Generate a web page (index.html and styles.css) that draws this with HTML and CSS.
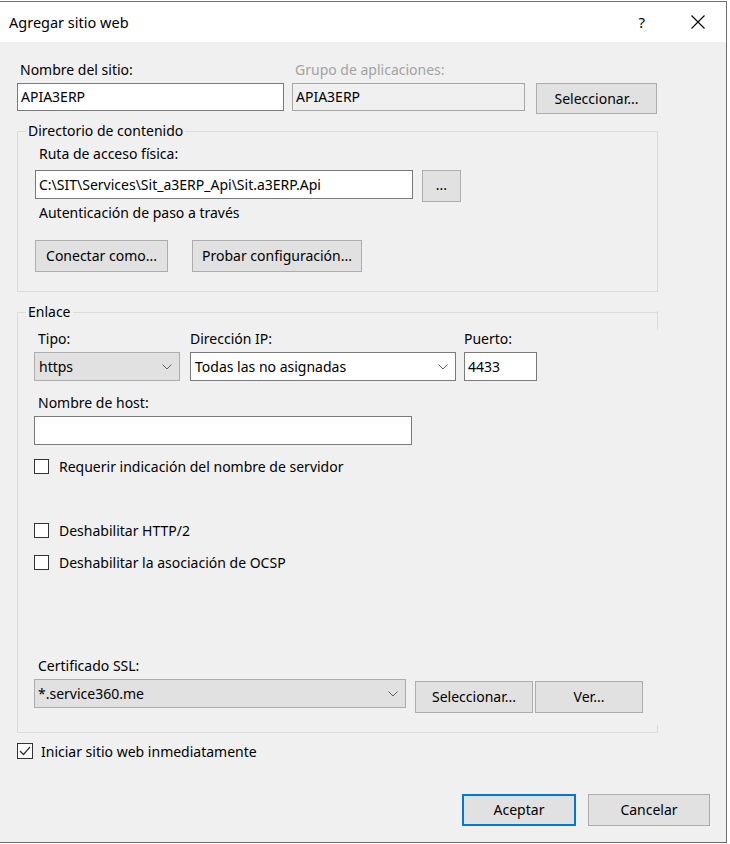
FILE: index.html
```html
<!DOCTYPE html>
<html lang="es">
<head>
  <meta charset="UTF-8" />
  <title>Agregar sitio web</title>
  <link rel="stylesheet" href="styles.css">
</head>
<body>

  <div class="window">
    <div class="titlebar">
      <span class="title">Agregar sitio web</span>
      <span class="help">?</span>
      <svg class="close" width="14" height="14" viewBox="0 0 14 14">
        <path d="M0.5 0.5 L13.5 13.5 M13.5 0.5 L0.5 13.5" stroke="#000" stroke-width="1.1" fill="none" />
      </svg>
    </div>

    <div class="client">
      <div class="row-site">
        <div class="field field-name">
          <div class="lbl">Nombre del sitio:</div>
          <div class="textbox">APIA3ERP</div>
        </div>
        <div class="field field-pool">
          <div class="lbl lbl-disabled">Grupo de aplicaciones:</div>
          <div class="textbox textbox-disabled">APIA3ERP</div>
        </div>
        <div class="btn btn-pool">Seleccionar...</div>
      </div>

      <fieldset class="group group-content">
        <legend>Directorio de contenido</legend>
        <div class="group-body">
          <div class="lbl lbl-indent">Ruta de acceso física:</div>
          <div class="path-row">
            <div class="textbox textbox-path">C:\SIT\Services\Sit_a3ERP_Api\Sit.a3ERP.Api</div>
            <div class="btn btn-browse">...</div>
          </div>
          <div class="lbl lbl-indent lbl-auth">Autenticación de paso a través</div>
          <div class="auth-row">
            <div class="btn btn-connect">Conectar como...</div>
            <div class="btn btn-test">Probar configuración...</div>
          </div>
        </div>
      </fieldset>

      <fieldset class="group group-binding">
        <legend>Enlace</legend>
        <div class="group-body">
          <div class="binding-row">
            <div class="col col-type">
              <div class="lbl lbl-indent">Tipo:</div>
              <div class="combo combo-gray">
                <span>https</span>
                <svg class="chevron" width="10" height="6" viewBox="0 0 10 6"><polyline points="0.5,0.5 5,5 9.5,0.5" fill="none" stroke="#606060" stroke-width="1" /></svg>
              </div>
            </div>
            <div class="col col-ip">
              <div class="lbl">Dirección IP:</div>
              <div class="combo combo-white">
                <span>Todas las no asignadas</span>
                <svg class="chevron" width="10" height="6" viewBox="0 0 10 6"><polyline points="0.5,0.5 5,5 9.5,0.5" fill="none" stroke="#606060" stroke-width="1" /></svg>
              </div>
            </div>
            <div class="col col-port">
              <div class="lbl">Puerto:</div>
              <div class="textbox textbox-port">4433</div>
            </div>
          </div>

          <div class="lbl lbl-indent lbl-host">Nombre de host:</div>
          <div class="textbox textbox-host"></div>

          <div class="check check-sni"><span class="box"></span>Requerir indicación del nombre de servidor</div>
          <div class="check check-http2"><span class="box"></span>Deshabilitar HTTP/2</div>
          <div class="check check-ocsp"><span class="box"></span>Deshabilitar la asociación de OCSP</div>

          <div class="lbl lbl-indent lbl-cert">Certificado SSL:</div>
          <div class="cert-row">
            <div class="combo combo-gray combo-cert">
              <span>*.service360.me</span>
              <svg class="chevron" width="10" height="6" viewBox="0 0 10 6"><polyline points="0.5,0.5 5,5 9.5,0.5" fill="none" stroke="#606060" stroke-width="1" /></svg>
            </div>
            <div class="btn btn-cert-select">Seleccionar...</div>
            <div class="btn btn-cert-view">Ver...</div>
          </div>
        </div>
      </fieldset>

      <div class="check check-start">
        <span class="box">
          <svg width="14" height="14" viewBox="0 0 14 14"><polyline points="2,7 5.5,10.5 12,3" fill="none" stroke="#333" stroke-width="1.2" /></svg>
        </span>Iniciar sitio web inmediatamente
      </div>

      <div class="footer">
        <div class="btn btn-ok">Aceptar</div>
        <div class="btn btn-cancel">Cancelar</div>
      </div>
    </div>
  </div>

</body>
</html>
```

FILE: styles.css
```css
* { box-sizing: border-box; }

body {
  margin: 0;
  background: #ffffff;
  font-family: 'Noto Sans', 'Open Sans', sans-serif;
  font-size: 14px;
  color: #000;
}

.window {
  width: 727px;
  height: 842px;
  margin-top: 1px;
  border: 1px solid #6e6e6e;
  border-left: 0;
  background: #f0f0f0;
  display: flex;
  flex-direction: column;
}

.titlebar {
  height: 40px;
  background: #ffffff;
  display: flex;
  align-items: center;
  padding-left: 9px;
  font-size: 14.5px;
}

.help { margin-left: auto; font-size: 15px; }

.close { margin-left: 46px; margin-right: 21px; }

.client {
  flex: 1;
  padding: 18px 16px 0 17px;
}

/* generic controls */
.lbl { height: 20px; line-height: 20px; white-space: nowrap; }
.lbl-indent { padding-left: 4px; }
.lbl-disabled { color: #a3a3a3; padding-left: 3px; }
.field-name .lbl { padding-left: 3px; }

.textbox {
  height: 28px;
  line-height: 26px;
  border: 1px solid #7a7a7a;
  background: #ffffff;
  padding: 0 3px;
  white-space: nowrap;
  overflow: hidden;
}

.textbox-disabled { background: #f0f0f0; border-color: #a6a6a6; }

.btn {
  height: 32px;
  line-height: 30px;
  border: 1px solid #adadad;
  background: #e1e1e1;
  text-align: center;
  white-space: nowrap;
}

.combo {
  height: 30px;
  display: flex;
  align-items: center;
  justify-content: space-between;
  padding: 0 7px 0 4px;
  white-space: nowrap;
}

.combo-gray { background: #e1e1e1; border: 1px solid #adadad; }
.combo-white { background: #ffffff; border: 1px solid #7a7a7a; }

/* first row */
.row-site { display: flex; align-items: flex-start; }
.field-name { width: 267px; }
.field-pool { width: 233px; margin-left: 8px; }
.field .lbl { margin-bottom: 3px; }
.btn-pool { width: 121px; margin-left: 11px; margin-top: 23px; height: 31px; line-height: 29px; }

/* group boxes */
.group {
  margin: 0;
  padding: 0;
  border: 1px solid #dcdcdc;
  width: 641px;
  min-width: 0;
}

.group legend {
  margin-left: 8px;
  padding: 0 2px;
  height: 20px;
  line-height: 20px;
}

.group-content { margin-top: 7px; }
.group-content .group-body { padding: 3px 0 19px 17px; }

.path-row { display: flex; align-items: flex-start; margin-top: 6px; }
.textbox-path { width: 378px; height: 29px; line-height: 27px; }
.btn-browse { width: 39px; margin-left: 9px; line-height: 28px; }
.lbl-auth { margin-top: 1px; }

.auth-row { display: flex; margin-top: 17px; gap: 24px; }
.btn-connect { width: 133px; }
.btn-test { width: 170px; }

.group-binding {
  margin-top: 10px;
  position: relative;
  border-right-color: transparent;
}

/* the right edge shows only near the corners */
.group-binding::before,
.group-binding::after {
  content: "";
  position: absolute;
  right: -1px;
  width: 1px;
  background: #dcdcdc;
}
.group-binding::before { top: -11px; height: 19px; }
.group-binding::after { bottom: -1px; height: 8px; }

.group-binding .group-body { padding: 7px 0 19px 16px; }

.binding-row { display: flex; }
.col .lbl { margin-bottom: 3px; }
.col-type { width: 146px; }
.col-ip { width: 266px; margin-left: 10px; }
.col-port { width: 73px; margin-left: 8px; }
.combo-gray, .combo-white, .textbox-port { height: 29px; }
.textbox-port { line-height: 27px; }

.lbl-host { margin-top: 12px; }
.textbox-host { width: 378px; height: 29px; margin-top: 3px; }

.check {
  height: 20px;
  display: flex;
  align-items: center;
  white-space: nowrap;
}

.check .box {
  width: 15px;
  height: 15px;
  border: 1px solid #333;
  background: #fff;
  margin-right: 10px;
  display: flex;
  align-items: center;
  justify-content: center;
}

.check-sni { margin-top: 11px; }
.check-http2 { margin-top: 44px; }
.check-ocsp { margin-top: 12px; }

.lbl-cert { margin-top: 84px; }
.cert-row { display: flex; align-items: flex-start; margin-top: 3px; }
.combo-cert { width: 372px; height: 29px; padding-left: 3px; }
.btn-cert-select { width: 118px; margin-left: 9px; margin-top: 2px; }
.btn-cert-view { width: 108px; margin-left: 2px; margin-top: 2px; }

.check-start { margin-top: 8px; }
.check-start .box { width: 16px; height: 16px; margin-right: 8px; }

.footer { display: flex; justify-content: flex-end; gap: 12px; margin-top: 33px; }
.btn-ok { width: 114px; border: 2px solid #0078d7; line-height: 28px; }
.btn-cancel { width: 122px; }
```
